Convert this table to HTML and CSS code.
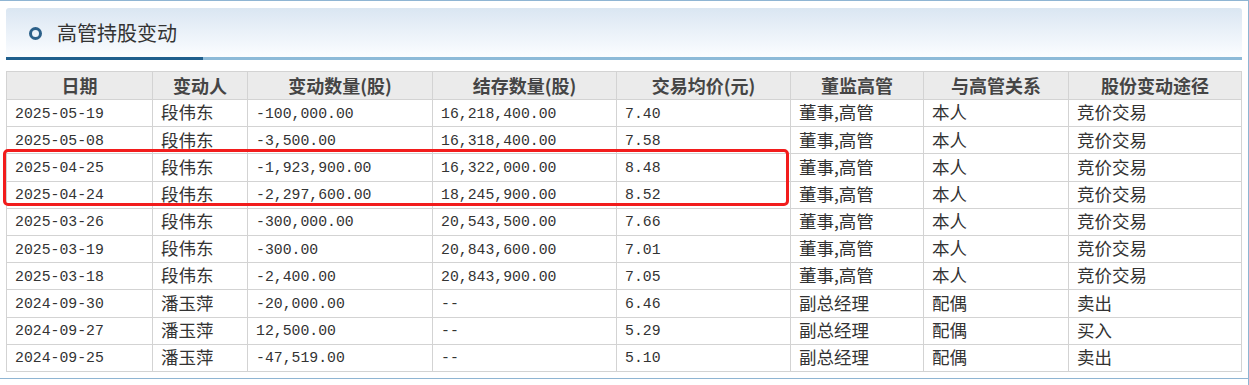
FILE: index.html
```html
<!DOCTYPE html>
<html lang="zh">
<head>
<meta charset="utf-8">
<title>高管持股变动</title>
<link rel="stylesheet" href="styles.css">
</head>
<body>
<div class="frame">
  <div class="panel">
    <div class="head">
      <span class="ring"></span>
      <span class="title">高管持股变动</span>
    </div>
    <div class="bar"><span class="bar-dark"></span></div>
    <div class="table-wrap">
      <table class="grid">
        <colgroup>
          <col class="c1"><col class="c2"><col class="c3"><col class="c4">
          <col class="c5"><col class="c6"><col class="c7"><col class="c8">
        </colgroup>
        <thead>
          <tr>
            <th>日期</th><th>变动人</th><th>变动数量(股)</th><th>结存数量(股)</th>
            <th>交易均价(元)</th><th>董监高管</th><th>与高管关系</th><th>股份变动途径</th>
          </tr>
        </thead>
        <tbody>
          <tr><td class="num">2025-05-19</td><td class="cjk">段伟东</td><td class="num">-100,000.00</td><td class="num">16,218,400.00</td><td class="num">7.40</td><td class="cjk">董事,高管</td><td class="cjk">本人</td><td class="cjk">竞价交易</td></tr>
          <tr><td class="num">2025-05-08</td><td class="cjk">段伟东</td><td class="num">-3,500.00</td><td class="num">16,318,400.00</td><td class="num">7.58</td><td class="cjk">董事,高管</td><td class="cjk">本人</td><td class="cjk">竞价交易</td></tr>
          <tr><td class="num">2025-04-25</td><td class="cjk">段伟东</td><td class="num">-1,923,900.00</td><td class="num">16,322,000.00</td><td class="num">8.48</td><td class="cjk">董事,高管</td><td class="cjk">本人</td><td class="cjk">竞价交易</td></tr>
          <tr><td class="num">2025-04-24</td><td class="cjk">段伟东</td><td class="num">-2,297,600.00</td><td class="num">18,245,900.00</td><td class="num">8.52</td><td class="cjk">董事,高管</td><td class="cjk">本人</td><td class="cjk">竞价交易</td></tr>
          <tr><td class="num">2025-03-26</td><td class="cjk">段伟东</td><td class="num">-300,000.00</td><td class="num">20,543,500.00</td><td class="num">7.66</td><td class="cjk">董事,高管</td><td class="cjk">本人</td><td class="cjk">竞价交易</td></tr>
          <tr><td class="num">2025-03-19</td><td class="cjk">段伟东</td><td class="num">-300.00</td><td class="num">20,843,600.00</td><td class="num">7.01</td><td class="cjk">董事,高管</td><td class="cjk">本人</td><td class="cjk">竞价交易</td></tr>
          <tr><td class="num">2025-03-18</td><td class="cjk">段伟东</td><td class="num">-2,400.00</td><td class="num">20,843,900.00</td><td class="num">7.05</td><td class="cjk">董事,高管</td><td class="cjk">本人</td><td class="cjk">竞价交易</td></tr>
          <tr><td class="num">2024-09-30</td><td class="cjk">潘玉萍</td><td class="num">-20,000.00</td><td class="num">--</td><td class="num">6.46</td><td class="cjk">副总经理</td><td class="cjk">配偶</td><td class="cjk">卖出</td></tr>
          <tr><td class="num">2024-09-27</td><td class="cjk">潘玉萍</td><td class="num">12,500.00</td><td class="num">--</td><td class="num">5.29</td><td class="cjk">副总经理</td><td class="cjk">配偶</td><td class="cjk">买入</td></tr>
          <tr><td class="num">2024-09-25</td><td class="cjk">潘玉萍</td><td class="num">-47,519.00</td><td class="num">--</td><td class="num">5.10</td><td class="cjk">副总经理</td><td class="cjk">配偶</td><td class="cjk">卖出</td></tr>
        </tbody>
      </table>
    </div>
  </div>
  <div class="mark"></div>
</div>
</body>
</html>
```

FILE: styles.css
```css
html, body {
  margin: 0;
  padding: 0;
  background: #ffffff;
}

.frame {
  position: relative;
  width: 1249px;
  height: 385px;
  box-sizing: border-box;
  border-right: 1px solid #8fb5d3;
}

.panel {
  width: 1248px;
  height: 379px;
  box-sizing: border-box;
  border-top: 1px solid #8fb5d3;
  border-bottom: 1px solid #8fb5d3;
  padding: 7px 6px 0 6px;
}

.head {
  height: 49px;
  display: flex;
  align-items: center;
  box-sizing: border-box;
  padding-left: 23px;
  border-radius: 3px 3px 0 0;
  background: linear-gradient(to bottom, #dae6f2 0%, #e9f0f8 45%, #fbfdff 100%);
}

.ring {
  width: 13px;
  height: 13px;
  box-sizing: border-box;
  border: 3px solid #2c6089;
  border-radius: 50%;
  margin-top: 2px;
}

.title {
  margin-left: 15px;
  font-family: "Noto Sans CJK SC", sans-serif;
  font-size: 20px;
  line-height: 1;
  color: #333333;
}

.bar {
  height: 3px;
  background: #8dbad8;
  display: flex;
}

.bar-dark {
  width: 197px;
  height: 3px;
  background: #1f5f8d;
}

.table-wrap {
  padding-top: 11px;
}

.grid {
  width: 1235px;
  border-collapse: collapse;
  table-layout: fixed;
  border: 1px solid #d3d3d3;
}

.c1 { width: 146px; }
.c2 { width: 95px; }
.c3 { width: 185px; }
.c4 { width: 184px; }
.c5 { width: 174px; }
.c6 { width: 133px; }
.c7 { width: 145px; }
.c8 { width: 173px; }

.grid th {
  height: 28px;
  box-sizing: border-box;
  padding: 0 0 2px 0;
  background: #ebebeb;
  border: 1px solid #d3d3d3;
  font-family: "Noto Sans CJK SC", sans-serif;
  font-size: 18px;
  font-weight: bold;
  color: #454545;
  text-align: center;
  vertical-align: middle;
  line-height: 1;
}

.grid td {
  height: 27.2px;
  box-sizing: border-box;
  padding: 0 0 0 8px;
  border: 1px solid #d3d3d3;
  color: #333333;
  text-align: left;
  vertical-align: middle;
  line-height: 1;
  white-space: nowrap;
}

.grid td.num {
  font-family: "Liberation Mono", "Noto Sans CJK SC", monospace;
  font-size: 14.8px;
  padding-top: 2px;
}

.grid td.cjk {
  font-family: "Noto Sans CJK SC", "Liberation Mono", sans-serif;
  font-size: 17.5px;
  padding-bottom: 2px;
}

.mark {
  position: absolute;
  left: 3px;
  top: 149px;
  width: 786px;
  height: 57px;
  box-sizing: border-box;
  border: 3px solid #f21c1c;
  border-radius: 5px;
}
```
